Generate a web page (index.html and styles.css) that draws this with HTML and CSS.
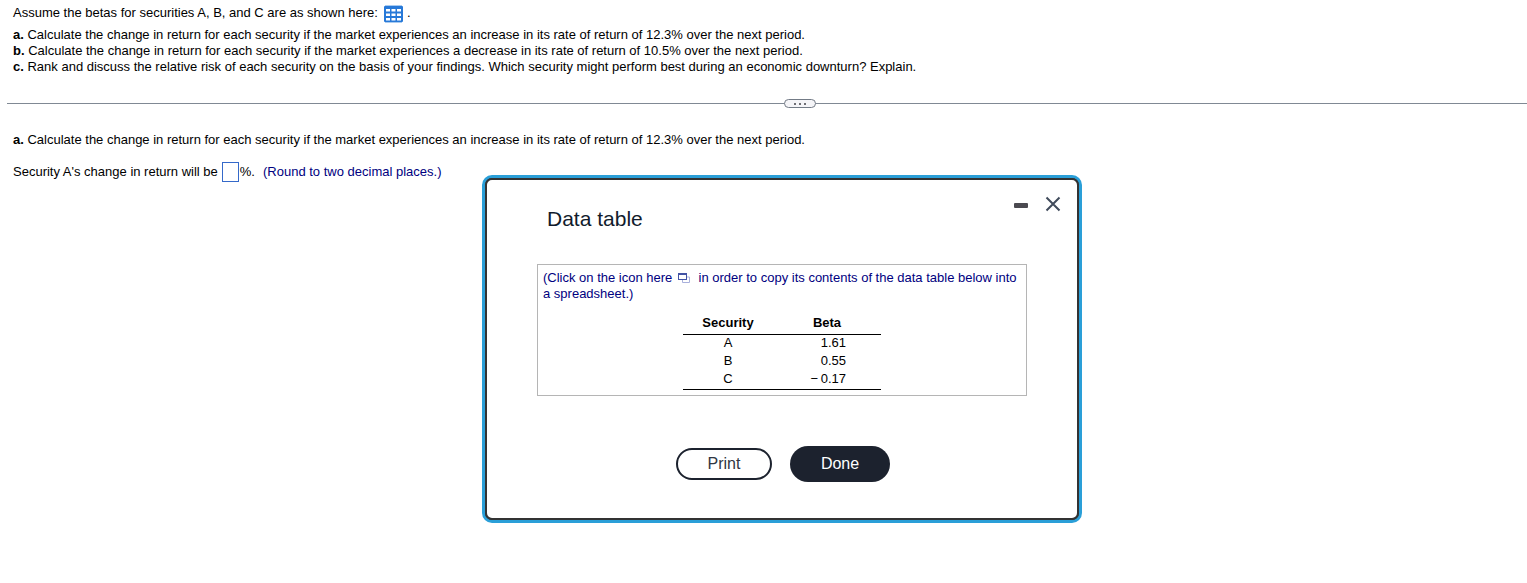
FILE: index.html
```html
<!DOCTYPE html>
<html lang="en">
<head>
<meta charset="utf-8">
<title>Security betas</title>
<link rel="stylesheet" href="styles.css">
</head>
<body>
<main class="page">
  <section class="problem">
    <p class="intro">Assume the betas for securities A, B, and C are as shown here:
      <button class="grid-button" type="button" aria-label="Open data table"><svg width="19" height="18" viewBox="0 0 19 18"><rect y="1" width="19" height="16" rx="1" fill="#2779d8"/><path d="M1 0.5h17M1 17.5h17" stroke="#a9cbf0"/><path d="M2 4h4v2.500H2zM7.500 4h4v2.500h-4zM13 4h4v2.500h-4zM2 8.500h4V11H2zM7.500 8.500h4V11h-4zM13 8.500h4V11h-4zM2 13h4v2.500H2zM7.500 13h4v2.500h-4zM13 13h4v2.500h-4z" fill="#fff"/></svg></button>
      .</p>
    <p><b>a.</b> Calculate the change in return for each security if the market experiences an increase in its rate of return of 12.3% over the next period.</p>
    <p><b>b.</b> Calculate the change in return for each security if the market experiences a decrease in its rate of return of 10.5% over the next period.</p>
    <p><b>c.</b> Rank and discuss the relative risk of each security on the basis of your findings. Which security might perform best during an economic downturn? Explain.</p>
  </section>

  <div class="divider">
    <button class="expander" type="button" aria-label="Expand"><i></i><i></i><i></i></button>
  </div>

  <section class="answer">
    <p><b>a.</b> Calculate the change in return for each security if the market experiences an increase in its rate of return of 12.3% over the next period.</p>
    <div class="entry">
      <label for="change-a">Security A's change in return will be</label>
      <input id="change-a" class="blank" type="text">
      <span>%.</span>
      <span class="hint">(Round to two decimal places.)</span>
    </div>
  </section>
</main>

<div class="dialog" role="dialog" aria-labelledby="dialog-title">
  <div class="dialog-frame">
    <header class="dialog-header">
      <h2 id="dialog-title">Data table</h2>
      <div class="window-controls">
        <button type="button" aria-label="Minimize"><svg width="14" height="16" viewBox="0 0 14 16"><rect y="7" width="14" height="5" rx="1" fill="#4b4a50"/></svg></button>
        <button type="button" aria-label="Close"><svg width="16" height="16" viewBox="0 0 16 16"><path d="M1.5 1.5l13 13M14.500 1.500l-13 13" stroke="#414b5c" stroke-width="2" fill="none"/></svg></button>
      </div>
    </header>
    <div class="dialog-body">
      <p class="copy-note">(Click on the icon here <button class="copy-button" type="button" aria-label="Copy table"><svg width="12" height="10" viewBox="0 0 12 10"><path d="M9 4h2.500v5.500h-7V7" stroke="#a9b0dc" fill="none"/><rect x=".5" y=".5" width="8" height="6" fill="#fff" stroke="#4353a4"/><path d="M0 1h9" stroke="#4353a4" stroke-width="2"/></svg></button> in order to copy its contents of the data table below into a spreadsheet.)</p>
      <table class="betas">
        <thead><tr><th>Security</th><th>Beta</th></tr></thead>
        <tbody>
          <tr><td>A</td><td>1.61</td></tr>
          <tr><td>B</td><td>0.55</td></tr>
          <tr><td>C</td><td>−&#8201;0.17</td></tr>
        </tbody>
      </table>
    </div>
    <footer class="dialog-footer">
      <button class="print" type="button">Print</button>
      <button class="done" type="button">Done</button>
    </footer>
  </div>
</div>
</body>
</html>
```
FILE: styles.css
```css
* { box-sizing: border-box; }

body {
  margin: 0;
  background: #fff;
  color: #000;
  font: 13px/16px "Liberation Sans", Arial, sans-serif;
}

p, h2 { margin: 0; }

button {
  padding: 0;
  border: 0;
  background: none;
  font-family: inherit;
  cursor: pointer;
}

svg { display: block; }

.page { padding: 5px 0 0 7px; }

.problem, .answer { padding-left: 6px; }

.intro {
  display: flex;
  align-items: flex-start;
  gap: 4px;
  height: 22px;
}

.grid-button { margin: 0 0 0 2px; }

.divider {
  display: flex;
  align-items: center;
  justify-content: center;
  height: 9px;
  margin: 24px 0;
  padding-left: 66px;
  background: linear-gradient(#808994, #808994) 0 4px / 100% 1px no-repeat;
}

.expander {
  display: flex;
  align-items: center;
  justify-content: center;
  gap: 3px;
  width: 32px;
  height: 9px;
  border: 1px solid #737b86;
  border-radius: 5px;
  background: #f5f5f8;
}

.expander i {
  width: 2px;
  height: 2px;
  background: #6e6e74;
}

.entry {
  display: flex;
  align-items: center;
  height: 20px;
  margin-top: 14px;
}

.blank {
  width: 17px;
  height: 20px;
  margin: 0 1px 0 4px;
  padding: 0;
  border: 1px solid #3569c9;
  background: #fff;
}

.hint { margin-left: 8px; color: #000080; }

.dialog {
  position: absolute;
  top: 175px;
  left: 482px;
  width: 600px;
  border: 3px solid #2a9fd8;
  border-radius: 10px;
  background: #333;
}

.dialog-frame {
  padding: 25px 50px 36px;
  border: 2px solid #333;
  border-radius: 7px;
  background: #fff;
}

.dialog-header {
  display: flex;
  align-items: flex-start;
  justify-content: space-between;
  margin: -9px -34px 0 10px;
}

.dialog-header h2 {
  margin-top: 9px;
  color: #111b2c;
  font-size: 21px;
  font-weight: 400;
  line-height: 28px;
}

.window-controls {
  display: flex;
  gap: 17px;
}

.dialog-body {
  margin-top: 31px;
  padding: 5px;
  border: 1px solid #b5b5b5;
}

.copy-note { color: #000080; }

.copy-button {
  margin: 0 5px 0 2px;
  vertical-align: -1px;
}

.betas {
  width: 198px;
  margin: 12px auto 0 140px;
  border-collapse: separate;
  border-spacing: 0;
  border-bottom: 1px solid #000;
}

.betas th {
  height: 21px;
  padding: 1px 0 3px;
  border-bottom: 1px solid #000;
}

.betas th:first-child { width: 90px; }

.betas td {
  height: 18px;
  padding: 0;
  text-align: center;
  vertical-align: top;
}

.betas td:last-child {
  padding-right: 35px;
  text-align: right;
}

.dialog-footer {
  display: flex;
  align-items: center;
  justify-content: center;
  gap: 18px;
  margin-top: 50px;
  padding-left: 2px;
}

.print, .done {
  border-radius: 18px;
  font-size: 16px;
  line-height: 20px;
}

.print {
  width: 96px;
  height: 32px;
  border: 2px solid #1c222e;
  color: #303642;
}

.done {
  width: 100px;
  height: 36px;
  background: #1c222e;
  color: #fff;
}
```
